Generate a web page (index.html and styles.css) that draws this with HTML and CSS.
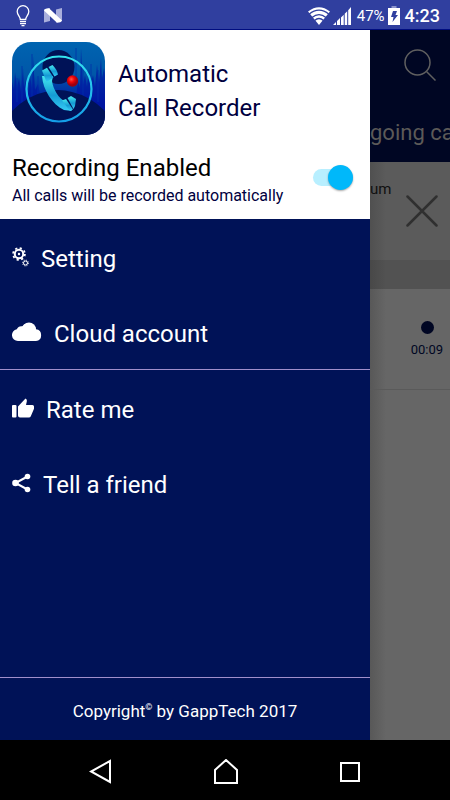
FILE: index.html
```html
<!DOCTYPE html>
<html lang="en">
<head>
<meta charset="utf-8">
<meta name="viewport" content="width=device-width, initial-scale=1">
<title>Automatic Call Recorder</title>
<link rel="stylesheet" href="styles.css">
</head>
<body>
<header class="status">
  <div class="status-group status-left">
    <svg width="14" height="22" viewBox="0 0 14 22" fill="none" stroke="#fff" stroke-width="1.3"><path d="M4.3 14.5C4.3 11.5 1.2 10 1.2 6.5a5.8 5.8 0 0 1 11.6 0c0 3.500-3.100 5-3.100 8z"/><path d="M4 16.700h6M4 18.700h6M5.500 20.700h3"/></svg>
    <svg width="18" height="15" viewBox="0 0 18 15"><path d="M0 1.500L6 0v13L0 14.500zM12 1.500L18 0v13l-6 1.500z" fill="#a9afdc"/><path d="M0 2.500Q1 .2 5 .2L18 12.500Q17 14.700 13 14.700z" fill="#fff"/></svg>
  </div>
  <div class="status-group">
    <svg width="22" height="18" viewBox="0 0 22 18"><path d="M0 4.500Q11-4 22 4.500L11 18z" fill="#fff"/><path d="M1 7.200Q11-.8 21 7.200M4 10.600Q11 4.600 18 10.600M6.500 13.500Q11 9.500 15.500 13.500" fill="none" stroke="#303f9f" stroke-width="1.300"/></svg>
    <svg width="18" height="18" viewBox="0 0 18 18" fill="#fff"><path d="M0 18l3-3v3zM4 14l3-3v7H4zM8 10.500l2.700-2.700V18H8zM11.700 6.700l2.500-2.500V18h-2.500zM15.200 3.200L18 0v18h-2.800z"/></svg>
    <span class="battery">47%</span>
    <svg width="12" height="19" viewBox="0 0 12 19"><path d="M3.500 0h5v2h-5z" fill="#8c94cc"/><path d="M0 2h12v17H0z" fill="#fff"/><path d="M5 5h4L7.500 9H10l-5.500 7 1-5H3z" fill="#303f9f"/></svg>
    <time class="clock">4:23</time>
  </div>
</header>
<main class="screen">
  <aside class="drawer">
    <div class="profile">
      <div class="brand">
        <svg class="app-icon" viewBox="0 0 93 93">
          <defs>
            <linearGradient id="sky" x2="0" y2="1"><stop offset="0" stop-color="#0064b0"/><stop offset=".35" stop-color="#0057a8"/><stop offset=".65" stop-color="#0018a0"/><stop offset="1" stop-color="#000c80"/></linearGradient>
            <linearGradient id="ring" x2="0" y2="1"><stop offset="0" stop-color="#35e3ee"/><stop offset="1" stop-color="#149ee8"/></linearGradient>
            <linearGradient id="phone" x2="0" y2="1"><stop offset="0" stop-color="#45e8ee"/><stop offset=".55" stop-color="#159bd4"/><stop offset="1" stop-color="#35cbf5"/></linearGradient>
            <radialGradient id="dot" cx=".4" cy=".35"><stop offset="0" stop-color="#ff5548"/><stop offset=".5" stop-color="#ee0508"/><stop offset="1" stop-color="#9c0010"/></radialGradient>
            <clipPath id="tile"><rect width="93" height="93" rx="19"/></clipPath>
          </defs>
          <g clip-path="url(#tile)">
            <path d="M0 0h93v93H0z" fill="url(#sky)"/>
            <path d="M0 65V40l2 8 1-18 2 16 2-10 2 14 2-24 1 20 2-8 2 16 2-20 2 12 1-32 2 34 3-6 2 12h36l2-15 2 7 1-40 2 37 2-10 2 12 2-18 2 14 2-8 2 12 2-22 2 18 2-25 1 20 2-10 2 14v36z" fill="#0014a2" opacity=".65"/>
            <path d="M5 60V36M10 62V24M20 55V12M26 52V34M64 56V6M71 58V26M79 58V22M86 60V28" stroke="#0030a8" stroke-width=".8"/>
            <ellipse cx="46.500" cy="25" rx="16" ry="17" fill="#001257"/>
            <path d="M0 69Q16 53 33 50Q46 46 60 50Q78 54 93 69v24H0z" fill="#001257"/>
            <circle cx="47" cy="47" r="32.500" fill="none" stroke="url(#ring)" stroke-width="2.200"/>
            <path d="M30 34C31 48 40 62 52 68L60 69L53 59C47 57 41 47 40 39L41 34z" fill="url(#phone)"/>
            <path d="M30 28.500l5-2.800 6.500 9.800-7 4.500z" fill="url(#phone)"/>
            <path d="M36.500 25l4-2q4.500 4.500 5.500 9.500l-3.500 2z" fill="url(#phone)"/>
            <path d="M50 58.500l4-1.500 7 10.500-3 1.500z" fill="url(#phone)"/>
            <path d="M55.500 56l3.500-2 5 3-1 7-1.500 3z" fill="url(#phone)"/>
            <circle cx="60.500" cy="39" r="5.700" fill="url(#dot)"/>
          </g>
        </svg>
        <h1 class="app-name">Automatic<br>Call Recorder</h1>
      </div>
      <div class="recording">
        <label class="recording-label" for="recording"><span class="recording-title">Recording Enabled</span><span class="recording-note">All calls will be recorded automatically</span></label>
        <input class="switch" id="recording" type="checkbox" role="switch" checked>
      </div>
    </div>
    <nav class="menu">
      <a class="item" href="#setting">
        <svg width="17" height="20" viewBox="0 0 17 20" fill="none" stroke="#fff"><circle cx="7" cy="7" r="4.200" stroke-width="2"/><circle cx="7" cy="7" r="5.900" stroke-width="1.800" stroke-dasharray="2.200 2.434"/><circle cx="7" cy="7" r="1.200" fill="#fff" stroke="none"/><circle cx="13.500" cy="16" r="2" stroke-width="1"/><circle cx="13.500" cy="16" r="2.900" stroke-width="1" stroke-dasharray="1.100 1.178"/></svg>
        <span class="item-text">Setting</span>
      </a>
      <a class="item" href="#cloud">
        <svg width="30" height="20" viewBox="0 0 30 20" fill="#fff"><path d="M6 19A5.900 5.900 0 0 1 4.800 7.300Q6.500 3.600 10.300 4.300A7.700 7.700 0 0 1 24 7.300a5.900 5.900 0 0 1 0 11.700z"/><circle cx="17" cy="7.500" r="7"/></svg>
        <span class="item-text">Cloud account</span>
      </a>
    </nav>
    <nav class="menu">
      <a class="item" href="#rate">
        <svg width="22" height="20" viewBox="0 0 22 20" fill="#fff"><rect y="7" width="4.500" height="12.500" rx="1"/><path d="M6 8.500L13.500.5q2 1 1.300 3L14 7h6.500q1.500 0 1.500 1.500v2.200l-3.200 7.500q-.5 1.300-2 1.300H8q-2 0-2-2z"/></svg>
        <span class="item-text">Rate me</span>
      </a>
      <a class="item" href="#share">
        <svg width="19" height="20" viewBox="0 0 19 20" fill="#fff"><path d="M15.500 3.500L3.500 10l12 6.500" fill="none" stroke="#fff" stroke-width="2"/><circle cx="15.500" cy="3.500" r="2.800"/><circle cx="3.500" cy="10" r="3.300"/><circle cx="15.500" cy="16.500" r="2.800"/></svg>
        <span class="item-text">Tell a friend</span>
      </a>
    </nav>
    <footer class="copyright"><span>Copyright<sup class="mark">©</sup> by GappTech 2017</span></footer>
  </aside>
  <section class="calls">
    <div class="calls-head">
      <button class="search" aria-label="Search"><svg width="32" height="32" viewBox="0 0 32 32" fill="none" stroke="#606060" stroke-width="1.500"><circle cx="13.500" cy="13.500" r="12.500"/><path d="M22.500 22.500L31.500 31.500"/></svg></button>
      <span class="tab">going ca</span>
    </div>
    <div class="promo">
      <span class="promo-text">um</span>
      <button class="close" aria-label="Close"><svg width="32" height="32" viewBox="0 0 32 32" stroke="#303030" stroke-width="2.500" stroke-linecap="round"><path d="M1.500 1.500l29 29M30.500 1.500l-29 29"/></svg></button>
    </div>
    <div class="day"></div>
    <div class="call"><span class="call-dot"></span><span class="call-time">00:09</span></div>
  </section>
</main>
<nav class="system">
  <button class="key" aria-label="Back"><svg width="24" height="26" viewBox="0 0 24 26"><path d="M21 2v21L2 12.500z"/></svg></button>
  <button class="key" aria-label="Home"><svg width="26" height="26" viewBox="0 0 26 26"><path d="M2 24V11L13 1l11 10v13z"/></svg></button>
  <button class="key" aria-label="Recent apps"><svg width="22" height="22" viewBox="0 0 22 22"><path d="M2 2h18v18H2z"/></svg></button>
</nav>
</body>
</html>
```
FILE: styles.css
```css
* {
  box-sizing: border-box;
}

body {
  margin: 0;
  min-height: 100vh;
  display: flex;
  flex-direction: column;
  background: #000;
  font-family: Roboto, "Noto Sans", sans-serif;
}

svg {
  display: block;
  flex: none;
}

button {
  padding: 0;
  border: 0;
  background: none;
}

.status {
  display: flex;
  justify-content: space-between;
  align-items: center;
  height: 30px;
  padding: 2px 10px 0 16px;
  border-bottom: 1px solid #000d80;
  background: #303f9f;
  color: #fff;
}

.status-group {
  display: flex;
  align-items: center;
  gap: 3px;
}

.status-left {
  gap: 14px;
}

.battery {
  font-size: 15px;
  margin-left: 3px;
}

.clock {
  font-size: 18px;
  font-weight: 500;
  margin-left: 2px;
}

.screen {
  flex: 1;
  display: flex;
}

.drawer {
  flex: 1;
  display: flex;
  flex-direction: column;
  background: #001257;
  color: #fff;
}

.profile {
  padding: 12px 12px 10px;
  background: #fff;
  color: #000040;
}

.brand {
  display: flex;
  align-items: center;
  gap: 13px;
}

.app-icon {
  width: 93px;
  height: 93px;
}

.app-name {
  margin: 4px 0 0;
  font-size: 24px;
  line-height: 34px;
  font-weight: 400;
}

.recording {
  display: flex;
  align-items: center;
  justify-content: space-between;
  margin-top: 18px;
  padding-right: 5px;
}

.recording-label {
  display: flex;
  flex-direction: column;
}

.recording-title {
  color: #000;
  font-size: 24px;
  line-height: 30px;
}

.recording-note {
  font-size: 16px;
  line-height: 26px;
}

.switch {
  appearance: none;
  display: flex;
  align-items: center;
  justify-content: flex-end;
  width: 40px;
  height: 17px;
  margin: 0 0 8px;
  border-radius: 9px;
  background: #b8efff;
}

.switch::before {
  content: "";
  width: 25px;
  height: 25px;
  border-radius: 50%;
  background: #00b8fa;
  box-shadow: 0 1px 2px rgba(0, 0, 0, .35);
}

.menu {
  display: flex;
  flex-direction: column;
}

.menu + .menu {
  border-top: 1px solid #a08fcc;
}

.item {
  display: flex;
  align-items: center;
  gap: 12px;
  height: 75px;
  padding: 0 12px;
  color: #fff;
  font-size: 24px;
  text-decoration: none;
}

.item-text {
  padding-top: 5px;
}

.copyright {
  display: flex;
  align-items: center;
  justify-content: center;
  height: 63px;
  margin-top: auto;
  padding-top: 4px;
  border-top: 1px solid #a08fcc;
  font-size: 17px;
}

.mark {
  font-size: 9px;
  line-height: 1;
}

.calls {
  width: 80px;
  overflow: hidden;
  background: linear-gradient(90deg, #585858, #666 16px);
}

.calls-head {
  display: flex;
  flex-direction: column;
  align-items: flex-start;
  justify-content: space-between;
  height: 132px;
  padding: 19px 0 14px;
  background: #000623;
}

.search {
  margin-left: 34px;
}

.tab {
  color: #5c5a58;
  font-size: 22px;
  line-height: 30px;
  white-space: nowrap;
}

.promo {
  display: flex;
  justify-content: space-between;
  height: 98px;
  padding: 17px 12px 0 0;
  background: linear-gradient(90deg, #505050, #5b5b5b 16px);
}

.promo-text {
  color: #101010;
  font-size: 15px;
  line-height: 20px;
}

.close {
  align-self: flex-start;
  margin-top: 16px;
}

.day {
  height: 29px;
  background: linear-gradient(90deg, #484848, #525252 16px);
}

.call {
  display: flex;
  flex-direction: column;
  align-items: flex-end;
  height: 101px;
  padding: 32px 7px 0 0;
  border-bottom: 1px solid #5a5a5a;
}

.call-dot {
  width: 13px;
  height: 13px;
  margin-right: 9px;
  border-radius: 50%;
  background: #000623;
}

.call-time {
  margin-top: 8px;
  color: #000623;
  font-size: 13px;
}

.system {
  display: flex;
  align-items: center;
  justify-content: center;
  gap: 100px;
  height: 60px;
  padding-top: 4px;
}

.key svg {
  fill: none;
  stroke: #fff;
  stroke-width: 2;
}
```
